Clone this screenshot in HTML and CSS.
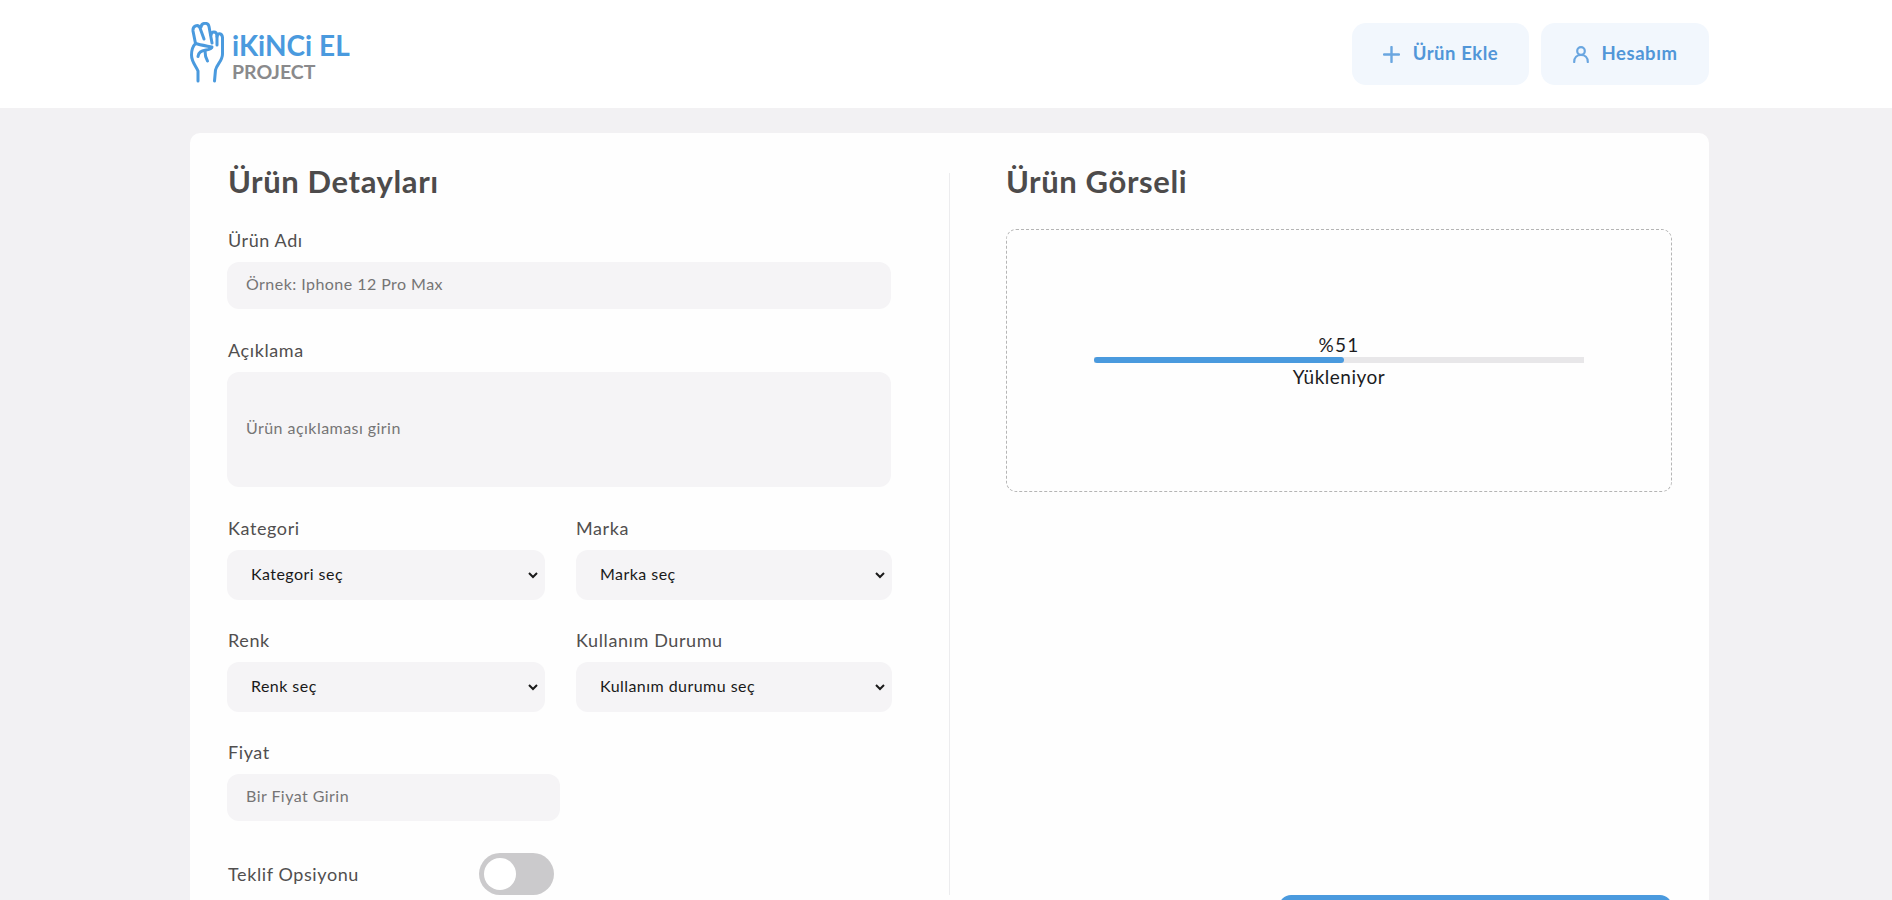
FILE: index.html
```html
<!DOCTYPE html>
<html lang="tr">
<head>
<meta charset="utf-8">
<title>Ürün Ekle</title>
<link rel="stylesheet" href="styles.css">
</head>
<body>
<header class="topbar">
  <div class="topbar-inner">
    <a class="logo" href="#">
      <svg class="logo-hand" viewBox="0 0 34 61" width="34" height="61" fill="none" stroke="#4a9ade" stroke-width="3" stroke-linecap="round" stroke-linejoin="round">
        <path d="M8 59V49C6 44 1.500 40 1.500 33C1.500 28 3 24 5.500 21.500L3 9C2.500 4 8 1.500 10 6L14 17"/>
        <path d="M11 5C11.500 .5 18 0 19 4.500L22 21"/>
        <path d="M21 13C21.500 9 26.500 9 27 13.500V23"/>
        <path d="M27 14.500C27.500 10.500 32 11 32.500 15.500V32C32.500 39 27 42 25.500 48L24.500 59"/>
        <path d="M5.500 21.500C10 23 17 24 22 25C22 27 19 27.500 16 28C11 29 8.500 30 8 34.500"/>
        <path d="M15 29C15 33 16 36.500 17.500 39"/>
      </svg>
      <span class="logo-text">
        <span class="logo-main">iKiNCi EL</span>
        <span class="logo-sub">PROJECT</span>
      </span>
    </a>
    <nav class="topbar-actions">
      <a class="top-btn top-btn-add" href="#">
        <svg viewBox="0 0 17 17" width="17" height="17" fill="none" stroke="#6aa6e0" stroke-width="2.400" stroke-linecap="round"><path d="M8.500 1v15M1 8.500h15"/></svg>
        <span class="top-btn-text">Ürün Ekle</span>
      </a>
      <a class="top-btn top-btn-account" href="#">
        <svg viewBox="0 0 16 17" width="16" height="17" fill="none" stroke="#6aa6e0" stroke-width="2.200" stroke-linecap="round"><circle cx="8" cy="5" r="3.800"/><path d="M1.200 16c0-4.500 2.800-7 6.800-7s6.800 2.500 6.800 7"/></svg>
        <span class="top-btn-text">Hesabım</span>
      </a>
    </nav>
  </div>
</header>
<main class="card">
  <section class="col-details">
    <h2 class="col-title">Ürün Detayları</h2>
    <div class="field">
      <label class="field-label">Ürün Adı</label>
      <input class="control" type="text" placeholder="Örnek: Iphone 12 Pro Max">
    </div>
    <div class="field">
      <label class="field-label">Açıklama</label>
      <textarea class="control control-area" placeholder="Ürün açıklaması girin"></textarea>
    </div>
    <div class="field-row">
      <div class="field">
        <label class="field-label">Kategori</label>
        <select class="control control-select"><option>Kategori seç</option></select>
      </div>
      <div class="field">
        <label class="field-label field-label-flush">Marka</label>
        <select class="control control-select"><option>Marka seç</option></select>
      </div>
    </div>
    <div class="field-row">
      <div class="field">
        <label class="field-label">Renk</label>
        <select class="control control-select"><option>Renk seç</option></select>
      </div>
      <div class="field">
        <label class="field-label field-label-flush">Kullanım Durumu</label>
        <select class="control control-select"><option>Kullanım durumu seç</option></select>
      </div>
    </div>
    <div class="field field-price">
      <label class="field-label">Fiyat</label>
      <input class="control" type="text" placeholder="Bir Fiyat Girin">
    </div>
    <div class="offer-row">
      <span class="field-label offer-label">Teklif Opsiyonu</span>
      <span class="toggle"><span class="toggle-knob"></span></span>
    </div>
  </section>
  <section class="col-image">
    <h2 class="col-title">Ürün Görseli</h2>
    <div class="dropzone">
      <div class="upload">
        <span class="upload-percent">%51</span>
        <div class="upload-track"><div class="upload-fill" style="width:51%"></div></div>
        <span class="upload-status">Yükleniyor</span>
      </div>
    </div>
    <div class="col-footer"><button class="save-btn" type="button"></button></div>
  </section>
</main>
</body>
</html>
```
FILE: styles.css
```css
* { box-sizing: border-box; }
html, body { margin: 0; height: 900px; overflow: hidden; }
body { background: #f2f1f3; font-family: Lato, "Noto Sans", sans-serif; color: #4d4b4b; }

.topbar { background: #fff; height: 108px; }
.topbar-inner { width: 1519px; margin-left: 190px; height: 100%; display: flex; justify-content: space-between; align-items: center; }

.logo { display: flex; align-items: flex-start; gap: 8px; text-decoration: none; margin-top: -2px; }
.logo-text { display: flex; flex-direction: column; padding-top: 9px; }
.logo-main { color: #4a9ade; font-size: 28px; line-height: 28px; font-weight: 700; }
.logo-sub { color: #8a8a8c; font-size: 19.500px; line-height: 26px; font-weight: 700; }

.topbar-actions { display: flex; gap: 12px; }
.top-btn { display: flex; align-items: center; justify-content: center; gap: 13px; height: 62px; border-radius: 14px; background: #f2f7fd; color: #5196d8; font-size: 18.500px; font-weight: 700; letter-spacing: .55px; text-decoration: none; }
.top-btn-text { margin-bottom: 2px; }
.top-btn-add { width: 177px; }
.top-btn-account { width: 168px; }

.card { width: 1519px; height: 900px; margin: 25px 0 0 190px; background: #fefefe; border-radius: 10px; padding: 40px 37px 0; display: flex; }
.col-details { width: 723px; height: 722px; padding-right: 58px; border-right: 1px solid #ececee; flex: none; }
.col-image { flex: 1; height: 722px; padding-left: 56px; display: flex; flex-direction: column; }

.col-title { margin: -12px 0 28px; font-size: 31px; line-height: 40px; font-weight: 700; letter-spacing: .6px; color: #4d4b4b; padding-left: 1px; }
.col-image .col-title { padding-left: 0; }

.field { margin-bottom: 30px; }
.field-label { display: block; font-size: 18px; line-height: 22px; margin-bottom: 11px; letter-spacing: .6px; color: #514f4f; padding-left: 1px; }
.field-label-flush { padding-left: 0; }

.control { display: block; width: 100%; border: 0; outline: 0; background: #f5f4f6; border-radius: 12px; height: 47px; padding: 0 19px 4px; font-family: inherit; font-size: 16px; letter-spacing: .45px; color: #1a1a1a; }
.control::placeholder { color: #757575; }
.control-area { height: 115px; padding-top: 46px; resize: none; }
.control-select { height: 50px; padding-left: 20px; border-right: 4px solid transparent; }

.field-row { display: grid; grid-template-columns: 318px 316px; column-gap: 31px; }
.field-row .field { margin-bottom: 29px; }
.field-price { width: 333px; margin-bottom: 32px; }

.offer-row { display: flex; align-items: center; justify-content: space-between; width: 327px; }
.offer-label { margin: 0; }
.toggle { display: flex; align-items: center; width: 75px; height: 42px; padding: 0 5px; border-radius: 21px; background: #cbcacc; }
.toggle-knob { width: 32px; height: 32px; border-radius: 50%; background: #fff; }

.dropzone { height: 263px; border: 1px dashed #b5b5b5; border-radius: 10px; display: flex; align-items: center; justify-content: center; flex: none; }
.upload { width: 490px; display: flex; flex-direction: column; align-items: center; color: #1c1c1f; font-size: 19px; letter-spacing: .5px; line-height: 24px; margin-top: 2px; }
.upload-percent { letter-spacing: 1.200px; }
.upload-status { line-height: 28px; }
.upload-track { width: 100%; height: 6px; background: #e8e7e9; }
.upload-fill { height: 100%; background: #4a9ade; border-radius: 3px; }

.col-footer { margin-top: auto; display: flex; justify-content: flex-end; }
.save-btn { width: 393px; height: 50px; flex: none; margin-bottom: -50px; border: 0; border-radius: 12px; background: #4a9ade; }
```
